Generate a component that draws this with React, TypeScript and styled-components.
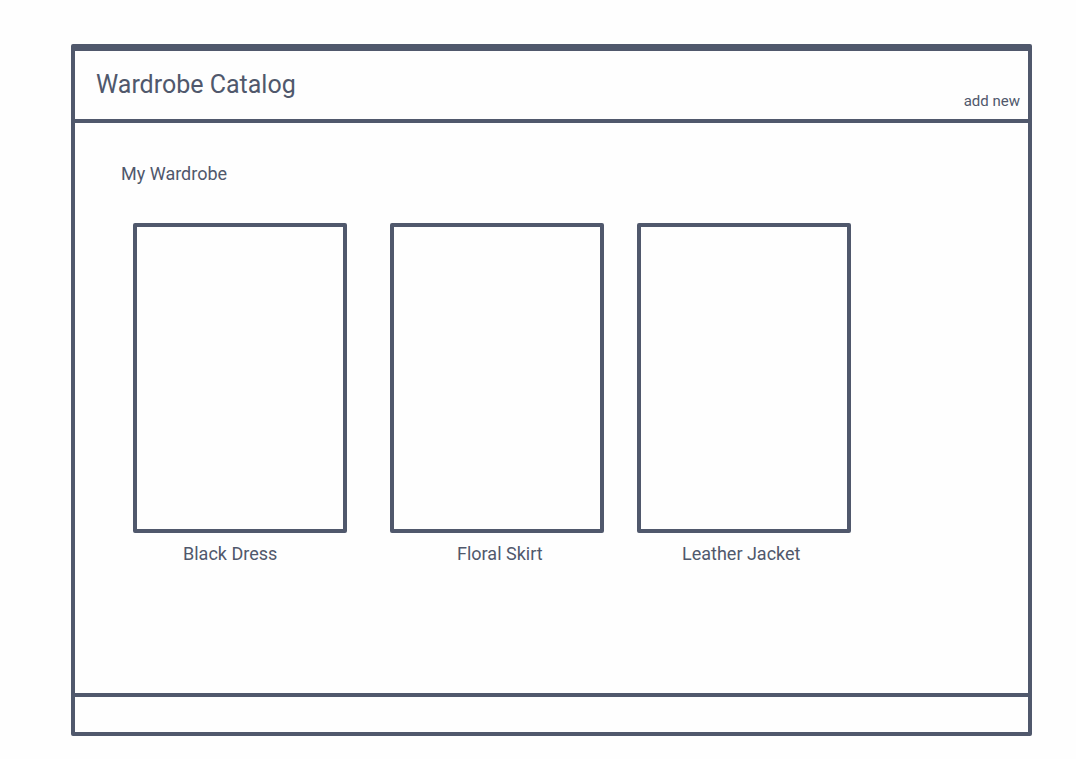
import React from "react";
import styled, { createGlobalStyle } from "styled-components";

const ink = "#50586c";

const GlobalStyle = createGlobalStyle`
  * { box-sizing: border-box; }
  body {
    margin: 0;
    background: #fefefe;
    color: ${ink};
    font-family: Roboto, "Liberation Sans", sans-serif;
  }
`;

const Page = styled.div`
  display: flex;
  min-height: 100vh;
  padding: 44px 44px 23px 71px;
`;

const Frame = styled.div`
  flex: 1;
  min-width: 0;
  display: flex;
  flex-direction: column;
  border: 4px solid ${ink};
  border-top-width: 7px;
  border-radius: 2px;
`;

const Header = styled.header`
  display: flex;
  justify-content: space-between;
  align-items: flex-end;
  height: 72px;
  padding: 0 8px 8px 21px;
  border-bottom: 4px solid ${ink};
`;

const Title = styled.h1`
  margin: 0;
  align-self: flex-start;
  padding-top: 20px;
  font-size: 25px;
  line-height: 28px;
  font-weight: 400;
`;

const AddButton = styled.button`
  padding: 0;
  border: 0;
  background: none;
  color: inherit;
  font-family: inherit;
  font-size: 15px;
  line-height: 20px;
  cursor: pointer;
`;

const Main = styled.main`
  flex: 1;
  padding: 39px 46px;
`;

const SectionTitle = styled.h2`
  margin: 0;
  font-size: 18px;
  line-height: 24px;
  font-weight: 400;
`;

const Gallery = styled.div`
  display: grid;
  grid-template-columns: 257px 247px 214px;
  padding: 37px 0 0 12px;
`;

const Item = styled.figure`
  width: 214px;
  margin: 0;
`;

const Photo = styled.div`
  height: 310px;
  border: 4px solid ${ink};
  border-radius: 2px;
`;

const Caption = styled.figcaption<{ $indent: number }>`
  padding: 9px 0 0 ${(p) => p.$indent}px;
  font-size: 18px;
  line-height: 24px;
  white-space: nowrap;
`;

const Footer = styled.footer`
  height: 39px;
  border-top: 4px solid ${ink};
`;

const items = [
  { name: "Black Dress", indent: 50 },
  { name: "Floral Skirt", indent: 67 },
  { name: "Leather Jacket", indent: 45 },
];

export default function App() {
  return (
    <Page>
      <GlobalStyle />
      <Frame>
        <Header>
          <Title>Wardrobe Catalog</Title>
          <AddButton type="button">add new</AddButton>
        </Header>
        <Main>
          <SectionTitle>My Wardrobe</SectionTitle>
          <Gallery>
            {items.map((item) => (
              <Item key={item.name}>
                <Photo />
                <Caption $indent={item.indent}>{item.name}</Caption>
              </Item>
            ))}
          </Gallery>
        </Main>
        <Footer />
      </Frame>
    </Page>
  );
}
